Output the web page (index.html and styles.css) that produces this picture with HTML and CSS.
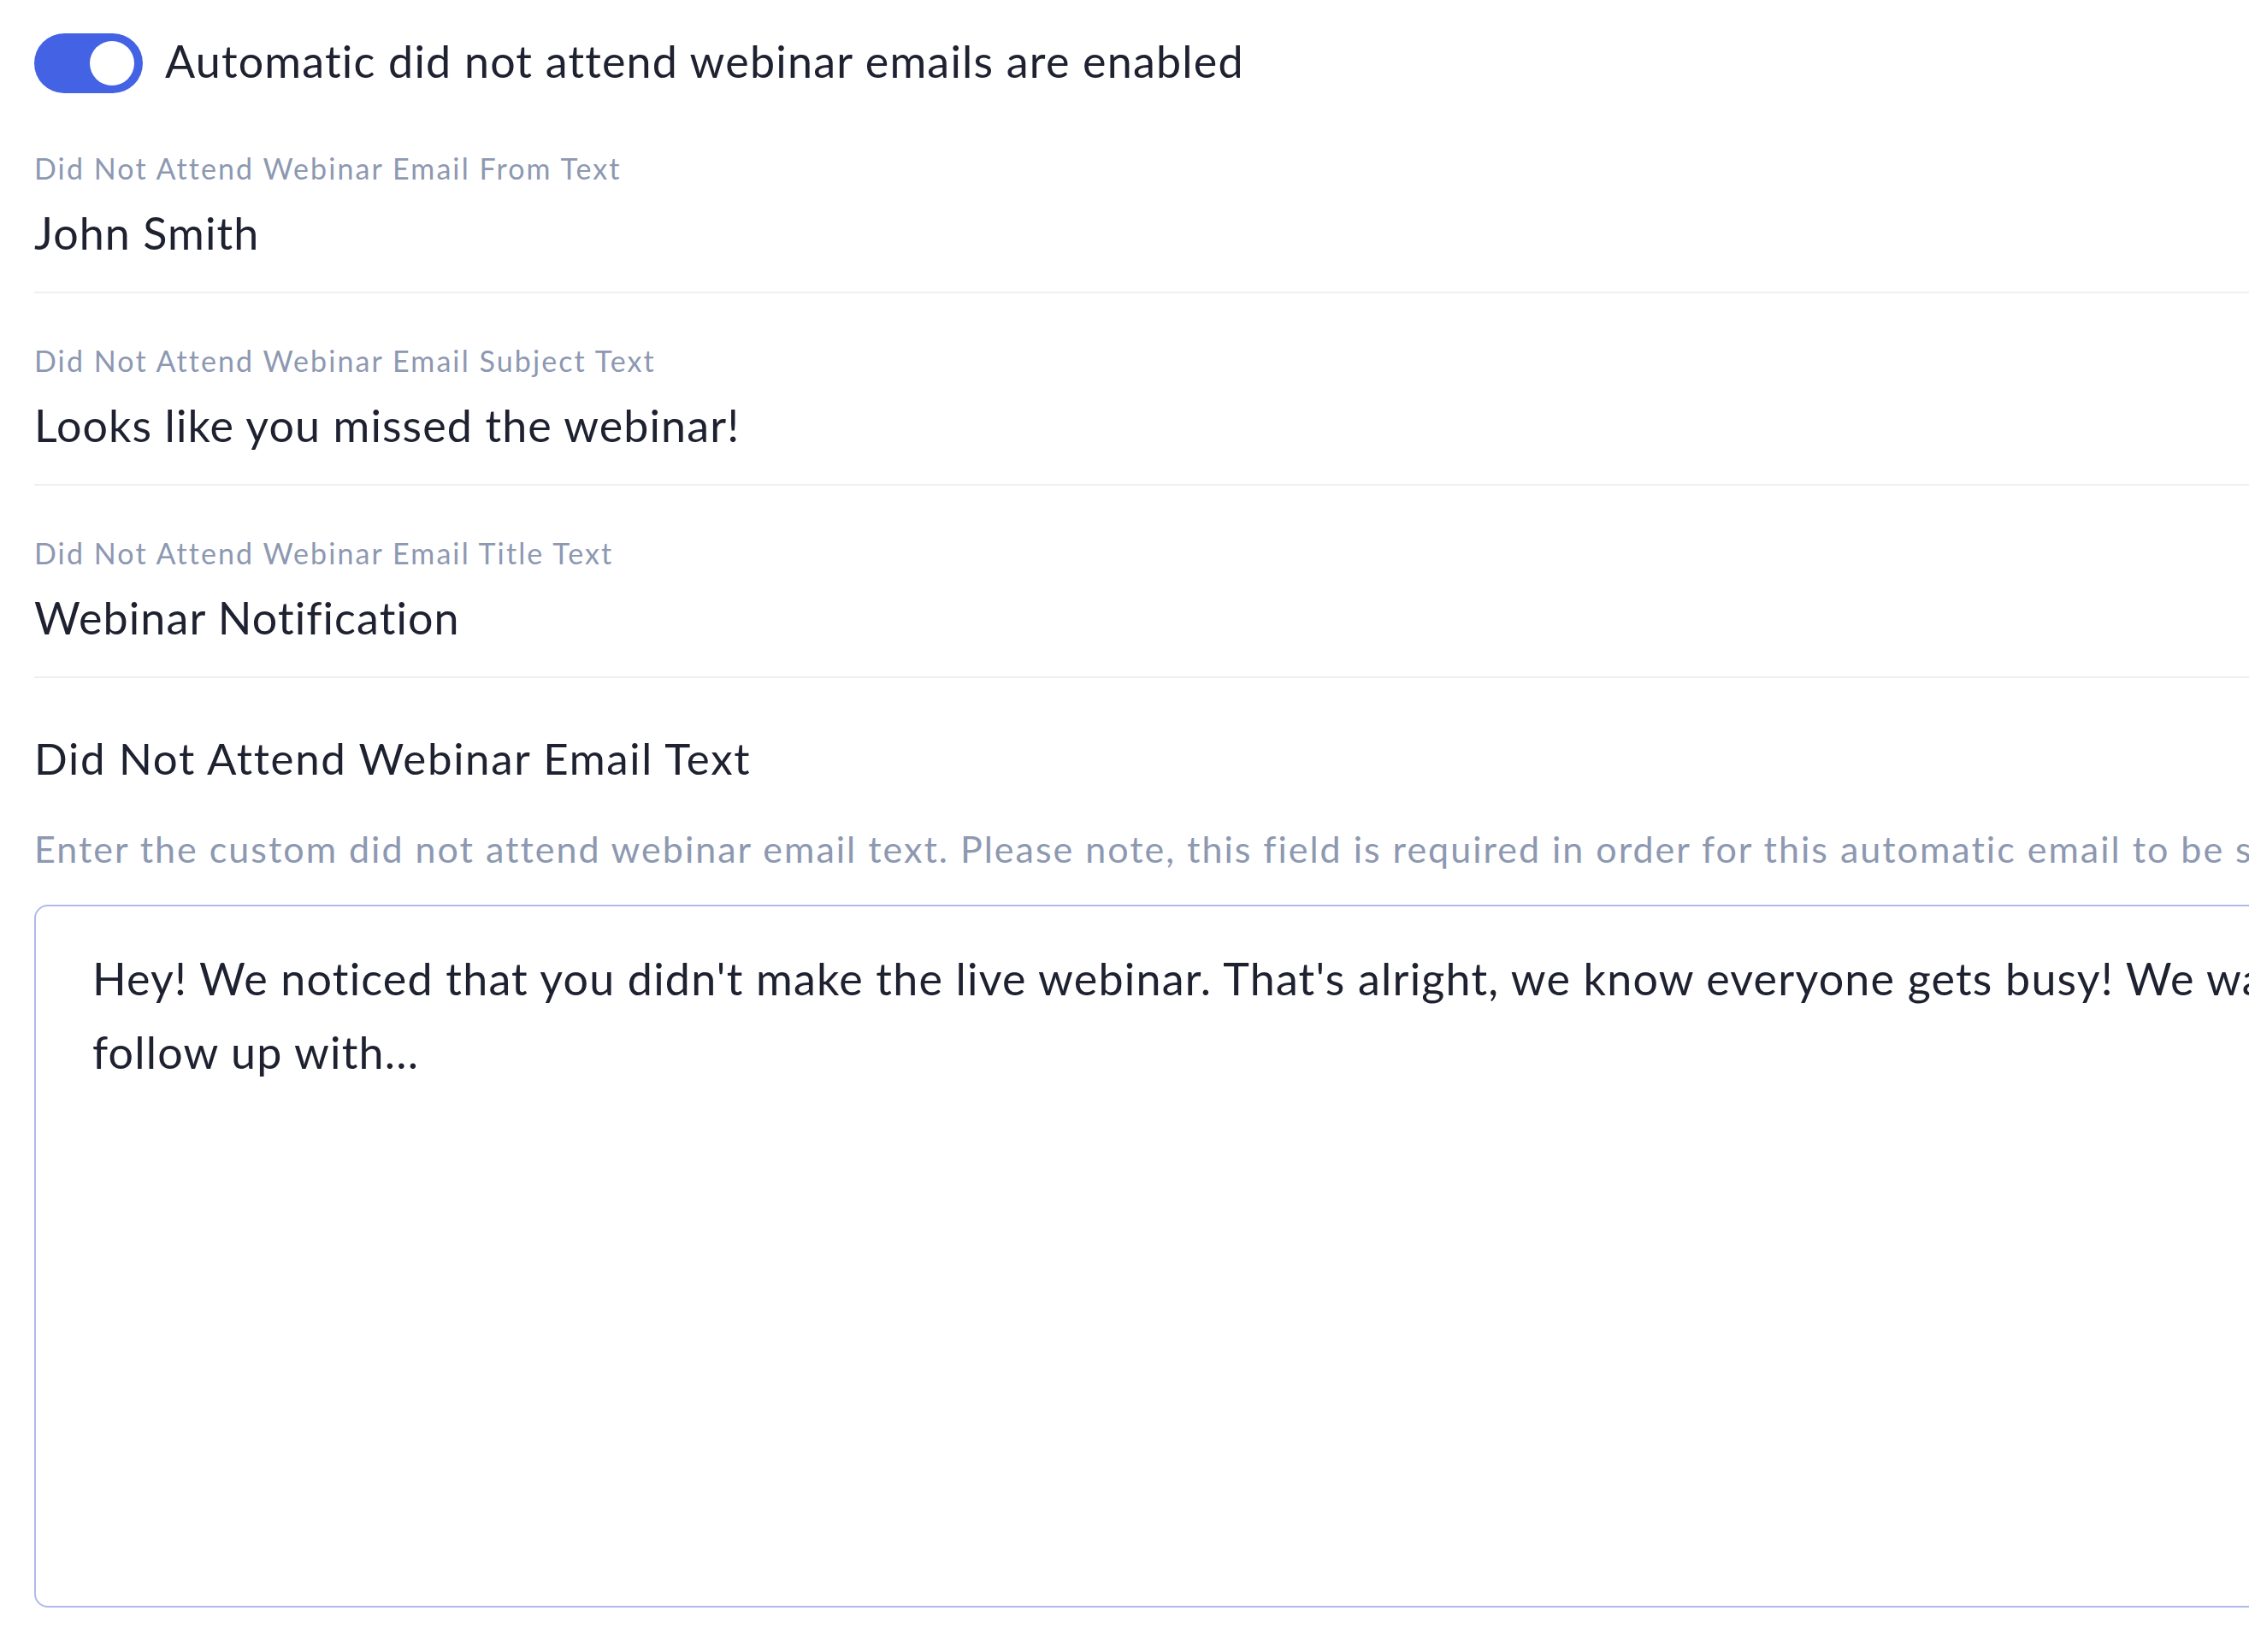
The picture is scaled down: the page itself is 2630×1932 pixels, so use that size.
FILE: index.html
```html
<!DOCTYPE html>
<html lang="en">
<head>
<meta charset="utf-8">
<title>Did not attend webinar emails</title>
<link rel="stylesheet" href="styles.css">
</head>
<body>
<main class="page">
  <div class="toggle-row">
    <span class="toggle" role="switch" aria-checked="true"><span class="knob"></span></span>
    <span class="toggle-label">Automatic did not attend webinar emails are enabled</span>
  </div>

  <section class="field first">
    <div class="field-label">Did Not Attend Webinar Email From Text</div>
    <div class="field-value">John Smith</div>
  </section>
  <section class="field">
    <div class="field-label">Did Not Attend Webinar Email Subject Text</div>
    <div class="field-value">Looks like you missed the webinar!</div>
  </section>
  <section class="field">
    <div class="field-label">Did Not Attend Webinar Email Title Text</div>
    <div class="field-value">Webinar Notification</div>
  </section>

  <section class="body-section">
    <h2 class="section-title">Did Not Attend Webinar Email Text</h2>
    <p class="helper">Enter the custom did not attend webinar email text. Please note, this field is required in order for this automatic email to be sent.</p>
    <div class="textbox">
      <div class="textbox-line">Hey! We noticed that you didn't make the live webinar. That's alright, we know everyone gets busy! We wanted to</div>
      <div class="textbox-line">follow up with...</div>
    </div>
  </section>
</main>
</body>
</html>
```

FILE: styles.css
```css
html, body {
  margin: 0;
  padding: 0;
  background: #ffffff;
  overflow: hidden;
}

body {
  font-family: "Lato", "Noto Sans", sans-serif;
  color: #1e2130;
}

.page {
  width: 3000px;
  padding: 39px 0 0 40px;
  box-sizing: border-box;
}

.toggle-row {
  display: flex;
  align-items: center;
  gap: 26px;
  height: 70px;
}

.toggle {
  flex: none;
  width: 127px;
  height: 70px;
  border-radius: 35px;
  background: #4462e4;
  display: flex;
  align-items: center;
  justify-content: flex-end;
  padding-right: 10px;
  box-sizing: border-box;
}

.knob {
  width: 52px;
  height: 52px;
  border-radius: 50%;
  background: #ffffff;
}

.toggle-label {
  font-size: 52px;
  line-height: 64px;
  letter-spacing: 1.2px;
  white-space: nowrap;
  padding-bottom: 6px;
}

.field {
  padding: 59px 0 38px;
  border-bottom: 2px solid #efeff2;
  display: flex;
  flex-direction: column;
  gap: 24px;
}

.field.first {
  padding-top: 68px;
}

.field-label {
  font-size: 34px;
  line-height: 40px;
  letter-spacing: 2.1px;
  color: #8d98b1;
  white-space: nowrap;
}

.field-value {
  font-size: 52px;
  line-height: 62px;
  letter-spacing: 1.1px;
  white-space: nowrap;
}

.body-section {
  padding-top: 64px;
}

.section-title {
  margin: 0;
  font-size: 51px;
  line-height: 60px;
  letter-spacing: 1.7px;
  font-weight: 400;
  white-space: nowrap;
}

.helper {
  margin: 51px 0 0;
  font-size: 43px;
  line-height: 50px;
  letter-spacing: 2px;
  color: #8d98b1;
  white-space: nowrap;
}

.textbox {
  margin-top: 40px;
  height: 822px;
  box-sizing: border-box;
  border: 2px solid #b0bae8;
  border-radius: 16px;
  padding: 41px 0 0 66px;
}

.textbox-line {
  font-size: 52px;
  line-height: 86px;
  letter-spacing: 1.2px;
  white-space: nowrap;
}
```
